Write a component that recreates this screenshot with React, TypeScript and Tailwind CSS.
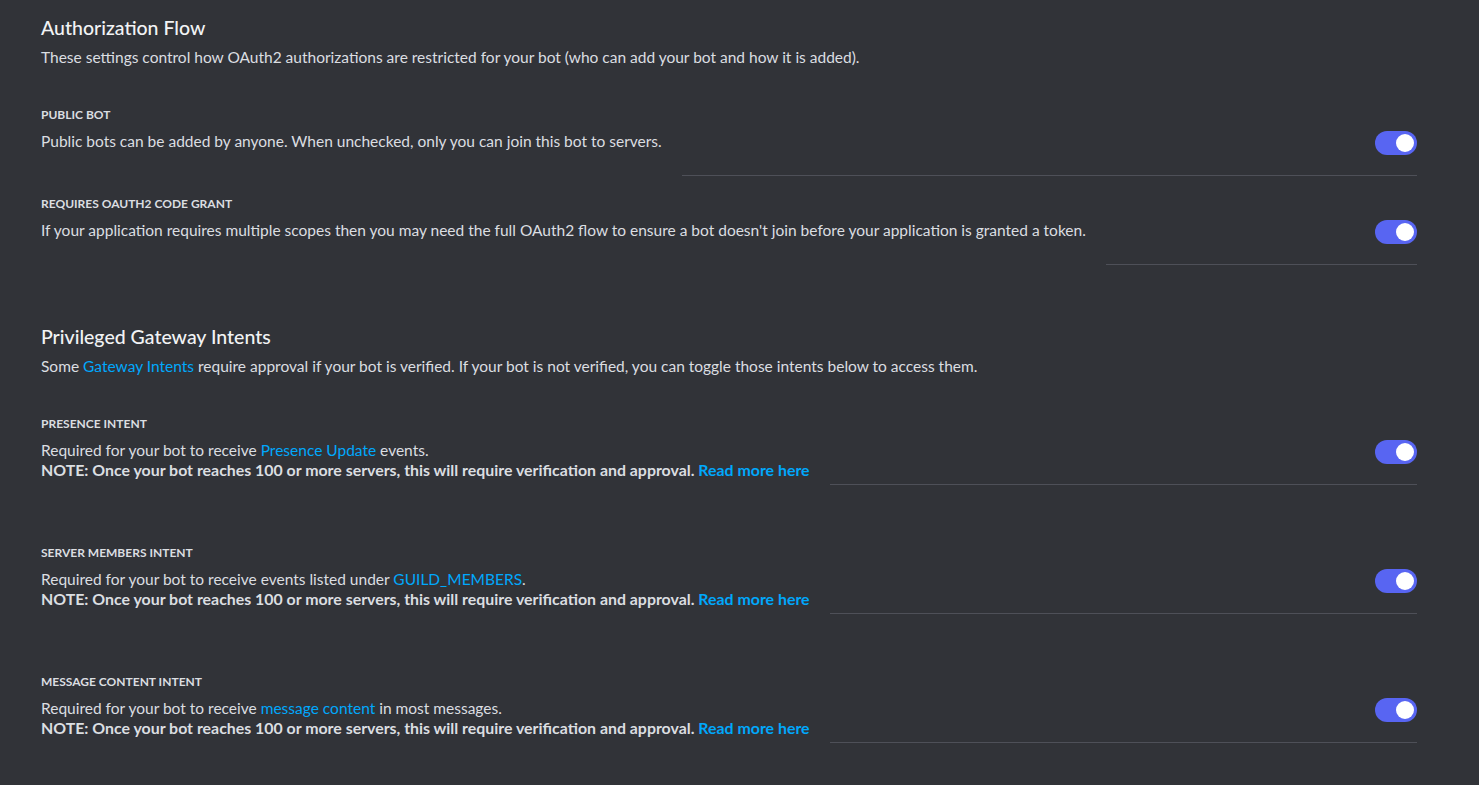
import React from "react";

const font = { fontFamily: 'Lato, "Noto Sans", sans-serif' };

function Toggle() {
  return (
    <div className="relative w-[42px] h-6 rounded-full bg-[#5865f2] shrink-0">
      <div className="absolute right-[3px] top-[3px] w-[18px] h-[18px] rounded-full bg-white" />
    </div>
  );
}

function Link({ children, bold }: { children: React.ReactNode; bold?: boolean }) {
  return <span className={bold ? "text-[#00a8fc] font-bold" : "text-[#00a8fc]"}>{children}</span>;
}

function Note() {
  return (
    <div className="text-[15.9px] leading-5 font-bold">
      NOTE: Once your bot reaches 100 or more servers, this will require verification and approval.{" "}
      <Link bold>Read more here</Link>
    </div>
  );
}

function SettingRow({ label, children, spaced }: { label: string; children: React.ReactNode; spaced?: boolean }) {
  return (
    <div className={spaced ? "mt-[60px] first:mt-0" : "mt-5 first:mt-0"}>
      <div className="text-xs leading-4 font-bold uppercase text-[#dbdee1]">{label}</div>
      <div className="mt-2 flex items-start">
        <div className="text-[15.5px] leading-5 text-[#dbdee1]">{children}</div>
        <div className="ml-5 flex-1 flex justify-end border-b border-[#4e5058] pb-5">
          <Toggle />
        </div>
      </div>
    </div>
  );
}

function Section({ title, desc, children, className }: { title: string; desc: React.ReactNode; children: React.ReactNode; className?: string }) {
  return (
    <section className={className}>
      <h2 className="text-[19.5px] leading-6 font-medium text-[#f2f3f5]">{title}</h2>
      <p className="mt-[7px] text-[15.5px] leading-5 text-[#dbdee1]">{desc}</p>
      <div className="mt-10">{children}</div>
    </section>
  );
}

export default function App() {
  return (
    <div className="min-h-screen bg-[#313338] pl-[41px] pr-[62px] pt-[16px] pb-10" style={font}>
      <Section
        title="Authorization Flow"
        desc="These settings control how OAuth2 authorizations are restricted for your bot (who can add your bot and how it is added)."
      >
        <SettingRow label="Public Bot">
          Public bots can be added by anyone. When unchecked, only you can join this bot to servers.
        </SettingRow>
        <SettingRow label="Requires OAuth2 Code Grant">
          If your application requires multiple scopes then you may need the full OAuth2 flow to ensure a bot doesn't join before your application is granted a token.
        </SettingRow>
      </Section>

      <Section
        className="mt-[60px]"
        title="Privileged Gateway Intents"
        desc={
          <>
            Some <Link>Gateway Intents</Link> require approval if your bot is verified. If your bot is not verified, you can toggle those intents below to access them.
          </>
        }
      >
        <SettingRow label="Presence Intent" spaced>
          <div>
            Required for your bot to receive <Link>Presence Update</Link> events.
          </div>
          <Note />
        </SettingRow>
        <SettingRow label="Server Members Intent" spaced>
          <div>
            Required for your bot to receive events listed under <Link>GUILD_MEMBERS</Link>.
          </div>
          <Note />
        </SettingRow>
        <SettingRow label="Message Content Intent" spaced>
          <div>
            Required for your bot to receive <Link>message content</Link> in most messages.
          </div>
          <Note />
        </SettingRow>
      </Section>
    </div>
  );
}
